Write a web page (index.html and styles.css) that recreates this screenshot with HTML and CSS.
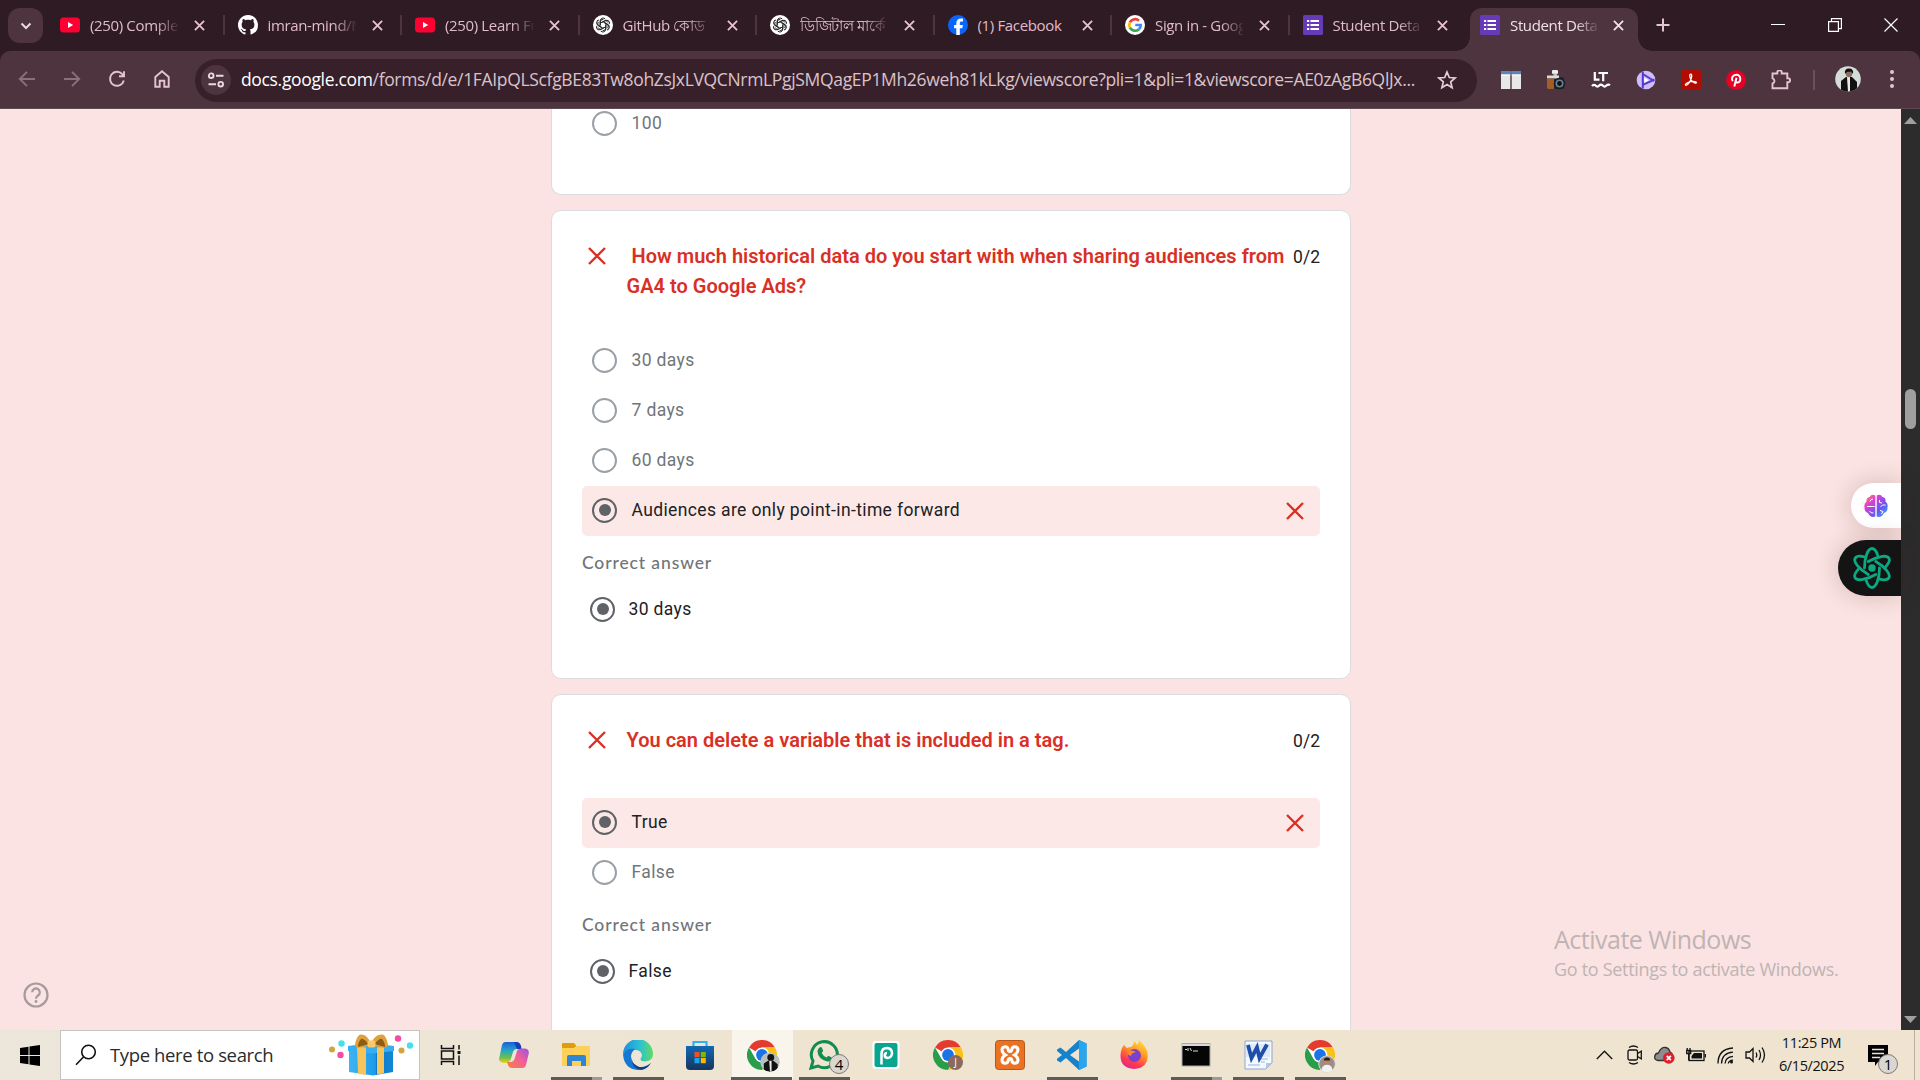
FILE: index.html
```html
<!DOCTYPE html>
<html lang="en">
<head>
<meta charset="utf-8">
<title>Student Details</title>
<link rel="stylesheet" href="styles.css">
</head>
<body>
<svg class="defs" aria-hidden="true">
  <defs>
    <symbol id="x" viewBox="0 0 12 12"><path d="M1 1l10 10M11 1L1 11" fill="none" stroke="currentColor" stroke-width="2"/></symbol>
    <symbol id="wrong" viewBox="0 0 18 18"><path d="M1 1l16 16M17 1L1 17" fill="none" stroke="#d93025" stroke-width="2.4"/></symbol>
    <symbol id="yt" viewBox="0 0 20 20"><rect y="2.5" width="20" height="15" rx="3.5" fill="#ff0033"/><path d="M8 7l5.2 3L8 13z" fill="#fff"/></symbol>
    <symbol id="gpt" viewBox="0 0 20 20"><circle cx="10" cy="10" r="10" fill="#fff"/><g fill="none" stroke="#222" stroke-width="1"><g id="petal"><path d="M7.3 10V5.8a2.8 2.8 0 0 1 5-1.7M7.3 8.2l3.6-2.1a2.8 2.8 0 0 1 4 1.4"/></g><use href="#petal" transform="rotate(60 10 10)"/><use href="#petal" transform="rotate(120 10 10)"/><use href="#petal" transform="rotate(180 10 10)"/><use href="#petal" transform="rotate(240 10 10)"/><use href="#petal" transform="rotate(300 10 10)"/></g></symbol>
    <symbol id="forms" viewBox="0 0 20 20"><rect width="20" height="20" rx="1.5" fill="#673ab7"/><path d="M7.500 6h8.500M7.500 10h8.500M7.500 14h8.500" stroke="#fff" stroke-width="2.200"/><path d="M4 6h2.200M4 10h2.200M4 14h2.200" stroke="#fff" stroke-width="2.200"/></symbol>
    <symbol id="chrome" viewBox="0 0 30 30"><circle cx="15" cy="15" r="15" fill="#fff"/><path d="M15 15L2 7.500A15 15 0 0 1 28 7.500H15z" fill="#e33b2e"/><path d="M2 7.500A15 15 0 0 0 15 30l6.500-11.250L15 15l-6.500 3.750z" fill="#2a9d4a"/><path d="M28 7.500A15 15 0 0 1 15 30l6.500-11.250L15 7.500z" fill="#fbc116"/><circle cx="15" cy="15" r="7.500" fill="#fff"/><circle cx="15" cy="15" r="5.900" fill="#1a73e8"/></symbol>
  </defs>
</svg>

<header class="browser">
  <div class="tabstrip">
    <button class="tab-search"><svg width="12" height="8" viewBox="0 0 12 8"><path d="M1.500 1.500L6 6l4.500-4.500" fill="none" stroke="#ecd9e0" stroke-width="2"/></svg></button>
    <div class="tab"><svg class="fav"><use href="#yt"/></svg><span class="tab-title">(250) Complete</span><svg class="close"><use href="#x"/></svg></div>
    <div class="tab"><svg class="fav" viewBox="0 0 16 16"><path fill="#fff" d="M8 0C3.580 0 0 3.580 0 8c0 3.540 2.290 6.530 5.470 7.590.4.070.55-.17.55-.38 0-.19-.01-.82-.01-1.490-2.010.37-2.530-.49-2.690-.94-.09-.23-.48-.94-.82-1.130-.28-.15-.68-.52-.01-.53.63-.01 1.080.58 1.230.82.72 1.210 1.870.87 2.330.66.07-.52.28-.87.51-1.070-1.780-.2-3.640-.89-3.640-3.950 0-.87.31-1.590.82-2.150-.08-.2-.36-1.020.08-2.120 0 0 .67-.21 2.200.82.64-.18 1.320-.27 2-.27s1.360.09 2 .27c1.530-1.040 2.200-.82 2.200-.82.44 1.100.16 1.920.08 2.120.51.56.82 1.270.82 2.150 0 3.070-1.870 3.750-3.650 3.950.29.25.54.73.54 1.480 0 1.070-.01 1.930-.01 2.200 0 .21.15.46.55.38A8.010 8.010 0 0 0 16 8c0-4.420-3.580-8-8-8z"/></svg><span class="tab-title">imran-mind/Mern</span><svg class="close"><use href="#x"/></svg></div>
    <div class="tab"><svg class="fav"><use href="#yt"/></svg><span class="tab-title">(250) Learn Full</span><svg class="close"><use href="#x"/></svg></div>
    <div class="tab"><svg class="fav"><use href="#gpt"/></svg><span class="tab-title">GitHub কোড</span><svg class="close"><use href="#x"/></svg></div>
    <div class="tab"><svg class="fav"><use href="#gpt"/></svg><span class="tab-title">ডিজিটাল মার্কে</span><svg class="close"><use href="#x"/></svg></div>
    <div class="tab"><svg class="fav" viewBox="0 0 20 20"><circle cx="10" cy="10" r="10" fill="#0866ff"/><path d="M8.300 19.900v-6.700H6.100V10h2.200V8.600c0-3.500 1.600-5.100 5-5.100.6 0 1.200.1 1.700.2v2.900h-1.400c-1.300 0-1.800.6-1.800 1.900V10h3.100l-.6 3.200h-2.500v6.700z" fill="#fff"/></svg><span class="tab-title whole">(1) Facebook</span><svg class="close"><use href="#x"/></svg></div>
    <div class="tab"><svg class="fav" viewBox="0 0 20 20"><circle cx="10" cy="10" r="10" fill="#fff"/><g fill="none" stroke-width="2.700"><path d="M14 5.800A5.800 5.800 0 0 0 4.900 7.300" stroke="#ea4335"/><path d="M4.900 7.300a5.800 5.800 0 0 0 0 5.400" stroke="#fbbc05"/><path d="M4.900 12.700a5.800 5.800 0 0 0 9 1.500" stroke="#34a853"/><path d="M13.900 14.200A5.500 5.500 0 0 0 15.700 10H10.300" stroke="#4285f4"/></g></svg><span class="tab-title">Sign in - Google</span><svg class="close"><use href="#x"/></svg></div>
    <div class="tab last"><svg class="fav"><use href="#forms"/></svg><span class="tab-title">Student Details</span><svg class="close"><use href="#x"/></svg></div>
    <div class="tab active"><svg class="fav"><use href="#forms"/></svg><span class="tab-title">Student Details</span><svg class="close"><use href="#x"/></svg></div>
    <svg class="plus" width="14" height="14" viewBox="0 0 14 14"><path d="M7 .5v13M.5 7h13" stroke="#e6c3d0" stroke-width="2"/></svg>
    <div class="win-controls">
      <svg width="14" height="14"><path d="M0 6.500h14" stroke="#fff"/></svg>
      <svg width="14" height="14" fill="none" stroke="#fff" stroke-width="1.200"><path d="M.6 3.600h9.800v9.800H.6zM3.500 3.500V.6h9.900v10h-3"/></svg>
      <svg width="14" height="14"><path d="M.5.5l13 13M13.500.5l-13 13" stroke="#fff" stroke-width="1.200"/></svg>
    </div>
  </div>

  <div class="toolbar">
    <div class="nav">
      <svg width="20" height="20" viewBox="0 0 20 20" stroke="#8b707b"><path d="M18 10H3M10 2.800L2.800 10l7.200 7.200"/></svg>
      <svg width="20" height="20" viewBox="0 0 20 20" stroke="#8b707b"><path d="M2 10h15M10 2.800l7.200 7.200-7.200 7.200"/></svg>
      <svg width="20" height="20" viewBox="0 0 20 20" stroke="#e6c3d0"><path d="M16.800 11.500A7 7 0 1 1 15.300 5.200L17 7M17 2.200V7.200H12"/></svg>
      <svg width="20" height="20" viewBox="0 0 20 20" stroke="#e6c3d0"><path d="M3.300 8L10 2.200 16.700 8v9.800H12.300v-6H7.700v6H3.300z"/></svg>
    </div>
    <div class="omnibox">
      <span class="site-info"><svg width="18" height="16" viewBox="0 0 18 16" fill="none" stroke="#ecd9e0" stroke-width="1.900"><circle cx="4.200" cy="3.700" r="2.300"/><path d="M9 3.700h7.500M1.500 12.200H9"/><circle cx="13.700" cy="12.200" r="2.300"/></svg></span>
      <span class="url"><b>docs.google.com</b>/forms/d/e/1FAIpQLScfgBE83Tw8ohZsJxLVQCNrmLPgjSMQagEP1Mh26weh81kLkg/viewscore?pli=1&amp;pli=1&amp;viewscore=AE0zAgB6QlJx...</span>
      <svg class="star" width="20" height="20" viewBox="0 0 20 20"><path d="M10 2l2.300 5.500 5.900.5-4.500 3.900 1.400 5.800L10 14.600l-5.100 3.100 1.400-5.800L1.800 8l5.900-.5z" fill="none" stroke="#e6cdd6" stroke-width="1.700"/></svg>
    </div>
    <div class="extensions">
      <svg viewBox="0 0 20 20"><path d="M0 1h9.300v18H0zM10.700 1H20v18h-9.300z" fill="#e8e8e8"/><path d="M0 1h9.300v3.500H0zM10.700 1H20v3.500h-9.300z" fill="#5b86bd"/><path d="M0 5h9.300M10.700 5H20" stroke="#fff"/></svg>
      <svg viewBox="0 0 20 20"><rect x="6" y="0" width="6" height="4" rx="1" fill="#eee"/><rect x="7.500" y="3.500" width="3.500" height="3" fill="#b9bcc0"/><rect x="1" y="7" width="17" height="12" rx="1.500" fill="#26282c"/><path d="M1 5.500h12v3H1z" fill="#d9dadb"/><path d="M1 8.500h7V19H2.500A1.500 1.500 0 0 1 1 17.500z" fill="#a35e28"/><circle cx="13.500" cy="13.500" r="5.800" fill="#1b1d20"/><circle cx="13.500" cy="13.500" r="4" fill="#6b8194"/><circle cx="13.500" cy="13.500" r="2.400" fill="#111"/></svg>
      <svg viewBox="0 0 20 20" fill="none" stroke="#fff" stroke-width="2.200"><path d="M3.800 2v7.700h4.700M7.500 3h9.500M12.200 3v8.200M1 16.200q1.800-2.500 3.600-.6t3.600 0 3.600 0 3.600 0 3.600-.3"/></svg>
      <svg viewBox="0 0 20 20"><circle cx="10" cy="10" r="9.300" fill="#cdbff7"/><path d="M6.800 1.800v16.600M6.800 14.800L18.500 9.500M6.800 4l11.400 7" stroke="#5a35d8" stroke-width="2"/><path d="M8.300 7.500l4.500 2.800-4.500 2.500z" fill="#fff"/></svg>
      <svg viewBox="0 0 20 20"><rect width="20" height="20" rx="3" fill="#b30b00"/><path d="M9.700 4.200c1.900 0 .9 4-.4 6.500-1.300 2.600-3.500 5.100-4.600 4.500-1.200-.8 2-3 5-3.500 3.200-.5 6-.2 5.700 1-.3 1.400-3.700-.3-5.300-2.700-1.300-2.300-1.900-5.800-.4-5.800z" fill="none" stroke="#fff" stroke-width="1.300"/></svg>
      <svg viewBox="0 0 20 20"><circle cx="10" cy="10" r="10" fill="#e60023"/><path d="M8.300 16.500l2.200-8.800M6.800 11.200C4.800 8.500 6.500 4.800 10.300 4.800c4.800 0 5.300 7.400 1.300 7.700-1.100 0-1.700-.5-2-1.200" fill="none" stroke="#fff" stroke-width="2"/></svg>
      <svg viewBox="0 0 20 20"><path d="M1.500 3.500h4.800v-1a2.200 2.200 0 0 1 4.400 0v1h5.600v4.800h.8a2 2 0 0 1 0 4h-.8v6H1.500v-4.800a2.700 2.700 0 0 0 0-5.200z" fill="none" stroke="#e6c3d0" stroke-width="1.900"/></svg>
    </div>
    <span class="divider"></span>
    <svg class="avatar" width="26" height="26" viewBox="0 0 26 26"><clipPath id="av"><circle cx="13" cy="13" r="12.800"/></clipPath><g clip-path="url(#av)"><path d="M0 0h26v26H0z" fill="#d5ddd8"/><path d="M6 26V15l5-4h6l5 5v10z" fill="#111"/><path d="M12 11h3v14l-2 1z" fill="#e9e9e9"/><ellipse cx="14" cy="7.500" rx="3.200" ry="3.800" fill="#8c6e60"/><path d="M10 8q-1-5.500 4-5.500T18 8l-2-2.500-4 .5z" fill="#111"/></g></svg>
    <svg class="kebab" width="6" height="22" fill="#e6c3d0"><circle cx="3" cy="4" r="2"/><circle cx="3" cy="11" r="2"/><circle cx="3" cy="18" r="2"/></svg>
  </div>
</header>

<div class="viewport">
  <main class="page">
    <section class="card card-cut">
      <div class="option"><span class="radio"></span>100</div>
    </section>

    <section class="card">
      <div class="question"><svg class="mark"><use href="#wrong"/></svg><h2>&nbsp;How much historical data do you start with when sharing audiences from GA4 to Google Ads?</h2><span class="score">0/2</span></div>
      <div class="option"><span class="radio"></span>30 days</div>
      <div class="option"><span class="radio"></span>7 days</div>
      <div class="option"><span class="radio"></span>60 days</div>
      <div class="option chosen"><span class="radio on"></span>Audiences are only point-in-time forward<svg class="mark"><use href="#wrong"/></svg></div>
      <div class="correct-label">Correct answer</div>
      <div class="answer"><span class="radio on"></span>30 days</div>
    </section>

    <section class="card">
      <div class="question"><svg class="mark"><use href="#wrong"/></svg><h2>You can delete a variable that is included in a tag.</h2><span class="score">0/2</span></div>
      <div class="option chosen"><span class="radio on"></span>True<svg class="mark"><use href="#wrong"/></svg></div>
      <div class="option"><span class="radio"></span>False</div>
      <div class="correct-label">Correct answer</div>
      <div class="answer"><span class="radio on"></span>False</div>
    </section>
  </main>
  <div class="scrollbar">
    <svg width="13" height="7"><path d="M6.500 0L13 7H0z" fill="#9f9f9f"/></svg>
    <span class="thumb"></span>
    <svg class="down" width="13" height="7"><path d="M6.500 7L13 0H0z" fill="#9f9f9f"/></svg>
  </div>

  <svg class="help" width="26" height="26" viewBox="0 0 26 26"><circle cx="13" cy="13" r="11.500" fill="none" stroke="#a69a9c" stroke-width="2.200"/><path d="M9.200 10.300a3.800 3.800 0 1 1 5.800 3.200c-1.300.9-2 1.500-2 3.200" fill="none" stroke="#a69a9c" stroke-width="2.200"/><circle cx="13" cy="19.500" r="1.400" fill="#a69a9c"/></svg>
  <div class="pill brain"><svg width="24" height="24" viewBox="0 0 24 24"><defs><linearGradient id="bg" x1="0" y1="0" x2="1" y2="1"><stop offset="0" stop-color="#ff9a3c"/><stop offset=".3" stop-color="#e040d0"/><stop offset=".65" stop-color="#6a55f0"/><stop offset="1" stop-color="#35b6ff"/></linearGradient></defs><path d="M11.300 1.500Q7.500-.3 5.500 3 2 3.500 2.500 7.500-.5 10 .6 13.500 0 18 4 19q2.500 5.200 7.300 3.500zM12.700 1.500Q16.500-.3 18.500 3 22 3.500 21.500 7.500q3 2.500 1.900 6 .6 4.500-3.400 5.500-2.500 5.200-7.300 3.500z" fill="url(#bg)"/><path d="M3 12.500h7.500M9 5q-2.500 0-3 2.500M5.500 17q1 2.500 4 2M15.500 6v2.500l2.500.5M21.500 11h-3l-2 2M16 16.500l3 1-1.500 2.500" stroke="#fff" stroke-width="1" fill="none"/></svg></div>
  <div class="pill atom"><svg width="40" height="44" viewBox="0 0 40 44" fill="none" stroke="#0aa982" stroke-width="2.800" stroke-linecap="round"><ellipse id="orb" cx="20" cy="22" rx="7.500" ry="19.500" pathLength="100" stroke-dasharray="36 14"/><use href="#orb" transform="rotate(60 20 22)"/><use href="#orb" transform="rotate(120 20 22)"/><circle cx="20" cy="22" r="3.700" fill="#0aa982" stroke="none"/></svg></div>
  <div class="activate"><p class="big">Activate Windows</p><p class="small">Go to Settings to activate Windows.</p></div>
</div>

<footer class="taskbar">
  <div class="start"><svg width="20" height="21" viewBox="0 0 20 21"><path d="M0 3l8.500-1.300V10H0zM9.500 1.500L20 0v10H9.500zM0 11h8.500v8.300L0 18zM9.500 11H20v10L9.500 19.500z"/></svg></div>
  <div class="search">
    <svg width="22" height="22" viewBox="0 0 22 22" fill="none" stroke="#111" stroke-width="1.600"><circle cx="13.500" cy="8" r="6.800"/><path d="M8.700 12.800L1 20.700"/></svg>
    <span>Type here to search</span>
    <svg class="gift" width="84" height="42" viewBox="0 0 84 42"><defs><linearGradient id="gb"><stop offset="0" stop-color="#3fb4f4"/><stop offset=".6" stop-color="#1b9bea"/><stop offset=".62" stop-color="#0b7ac6"/><stop offset="1" stop-color="#1488d6"/></linearGradient></defs><path d="M20 16l22 2.500L64 16v22l-20 3.500L20 38z" fill="url(#gb)"/><path d="M19 12l23-3 23 3v5l-22 2.500L19 17z" fill="#38aef2"/><path d="M28 12.500l9 1v27.500l-8-1.200zM55 12.500l-7 1v27l7-1.200z" fill="#f5c55c"/><path d="M42 11C34 13 27 16 26 11 27 4 30 0 32 .5c5 0 9 5 10 10.500zM42 11c8 2 15 5 17 0C58 4 55 0 53 .5c-6 0-10 5-11 10.500z" fill="#dfa13b"/><path d="M40 10q-6-6-8-5-3 3-3 8zM45 10q6-6 8-5 3 3 3 8z" fill="#8d5c15"/><rect x="38.500" y="6.500" width="8" height="7" rx="2" fill="#fac967"/><g><circle cx="3" cy="15.500" r="3" fill="#d4a33d"/><circle cx="12.500" cy="9.500" r="3.200" fill="#45e0e8"/><circle cx="11.500" cy="21" r="3.200" fill="#f74aa5"/><circle cx="69" cy="4.500" r="3.200" fill="#f74aa5"/><circle cx="72.500" cy="16.500" r="3" fill="#d4a33d"/><circle cx="81" cy="11.500" r="3.200" fill="#45e0e8"/></g></svg>
  </div>
  <div class="taskview"><svg width="21" height="20" viewBox="0 0 21 20" fill="none" stroke="#111" stroke-width="1.500"><path d="M1.500 0v3.500h12V0M1.500 6h12v8h-12zM1.500 20v-3.500h12V20M19 0v4.500M19 10.500V20"/><path d="M17.500 7.500h3" stroke-width="3"/></svg></div>

  <div class="apps">
    <div class="app"><svg viewBox="0 0 30 30"><defs><linearGradient id="c1" x1="0" y1="0" x2="0" y2="1"><stop offset="0" stop-color="#1c5fd8"/><stop offset=".4" stop-color="#23a5c8"/><stop offset=".75" stop-color="#6cc04a"/><stop offset="1" stop-color="#f5d21c"/></linearGradient><linearGradient id="c2" x1="1" y1="0" x2="0" y2="1"><stop offset="0" stop-color="#9a52e0"/><stop offset=".45" stop-color="#f0609a"/><stop offset="1" stop-color="#f7803b"/></linearGradient></defs><path d="M6 2h11q3 0 4 3l1 4h-4q-3 0-4 3l-2.500 8q-1 3-4 3H4q-5-1-3.500-6L3 5q1-3 3-3z" fill="url(#c1)"/><path d="M17 2q4 0 5 4l.6 3H18l-3-7z" fill="#143fb5"/><path d="M24 28H13q-3 0-4-3l-1-3h3.500q3 0 4-3L18 11q1-2.500 4-2.500h4q5 1 3.500 6L27 25q-1 3-3 3z" fill="url(#c2)"/></svg></div>
    <div class="app run more"><svg viewBox="0 0 30 30"><path d="M1 5V3.500Q1 3 2 3h11l2.500 3-2.500 2H1z" fill="#e19d05"/><path d="M1 8h12.500l2.500-2H29v20H1z" fill="#fdd05a"/><path d="M6 26v-9q0-2 2-2h15q2 0 2 2v9h-5v-5h-9v5z" fill="#2f86d4"/></svg></div>
    <div class="app run"><svg viewBox="0 0 30 30"><defs><linearGradient id="e1"><stop offset="0" stop-color="#1c8fe0"/><stop offset=".55" stop-color="#2cc0d5"/><stop offset="1" stop-color="#5fdc62"/></linearGradient></defs><path d="M0 14A15 15 0 0 1 30 14q0 7-7.500 7.500-5 0-5-2.500c0-1 1.500-2 1.500-4q-1-5-7-5-9 0-12 4z" fill="url(#e1)"/><path d="M0 14q4-6 12-5-4 3-4 8 1 8 8 10 6 1 12-4-5 7-13 7Q1 29 0 14z" fill="#1477d2"/><path d="M9 14q-2 9 6 12.500 7 2 13-3.500-3.500 6-10 7Q7 28 9 14z" fill="#123f87"/></svg></div>
    <div class="app"><svg viewBox="0 0 30 30"><path d="M8.500 7V2h13v5" fill="none" stroke="#2fb1f2" stroke-width="2.200"/><defs><linearGradient id="st" x1="0" y1="0" x2="0" y2="1"><stop offset="0" stop-color="#1268b4"/><stop offset="1" stop-color="#17355f"/></linearGradient></defs><path d="M1 6h28v20q0 4-4 4H5q-4 0-4-4z" fill="url(#st)"/><path d="M9.500 12H14.500v5.200h-5z" fill="#f15022"/><path d="M15.800 12h5v5.200h-5z" fill="#7fba00"/><path d="M9.500 18h5v5.200h-5z" fill="#18a3ee"/><path d="M15.800 18h5v5.200h-5z" fill="#fdb900"/></svg></div>
    <div class="app run current"><svg viewBox="0 0 30 30"><use href="#chrome" width="30" height="30"/></svg><svg class="mini" viewBox="0 0 26 26"><g clip-path="url(#av)"><path d="M0 0h26v26H0z" fill="#b9c0bd"/><path d="M5 26V15l6-4h6l6 5v10z" fill="#111"/><path d="M12 11h3v14l-2 1z" fill="#e9e9e9"/><circle cx="14" cy="7" r="4.500" fill="#181516"/></g></svg></div>
    <div class="app run"><svg viewBox="0 0 30 30"><path d="M2 28l2-7A13 13 0 1 1 9 26z" fill="none" stroke="#128c50" stroke-width="3"/><path d="M10 8q2-2 3 0l1.200 3-1.500 2q1.500 3 4.800 4.500l1.800-1.800 3.500 1.800q0 4-4.500 4Q9 19 8.500 11.500 8.600 9 10 8z" fill="#128c50"/></svg><span class="count">4</span></div>
    <div class="app"><svg viewBox="0 0 30 30"><rect x="1.500" y="1" width="27" height="28" rx="3" fill="#fff"/><rect x="3.500" y="3" width="23" height="24" rx="2" fill="#0aa58f"/><path d="M10.500 24.500V14q0-6 5.500-6 5 .5 5 5t-4.500 5q-3-.5-2.800-3 .3-2 2.300-2" fill="none" stroke="#fff" stroke-width="2.500"/></svg></div>
    <div class="app"><svg viewBox="0 0 30 30"><use href="#chrome" width="30" height="30"/></svg><span class="mini j">J</span></div>
    <div class="app"><svg viewBox="0 0 30 30"><rect x=".5" y=".5" width="29" height="29" rx="3" fill="#ec7223" stroke="#b4581c"/><path d="M15 11.500q-1.500 0-1.800-2-.4-2.700-3-2.700Q7 7 7 10q.2 3 3.500 5Q7 17 7 20q0 3.200 3.200 3.200 2.600 0 3-2.700.3-2 1.800-2t1.800 2q.4 2.700 3 2.700Q23 23.200 23 20q0-3-3.500-5Q22.800 13 23 10q0-3-3.200-3.200-2.600 0-3 2.700-.3 2-1.800 2z" fill="none" stroke="#fff" stroke-width="3"/></svg></div>
    <div class="app run"><svg viewBox="0 0 30 30"><path d="M22 0l7.500 3.500v23L22 30 9 18l-5.500 4.500L0 20.500v-1.700L5 15 0 11V9.500l3.500-2L9 12zM22 8.500L13 15l9 6.500z" fill="#1583cc" fill-rule="evenodd"/><path d="M22 0l7.500 3.500v23L22 30z" fill="#29a4ee"/></svg></div>
    <div class="app"><svg viewBox="0 0 30 30"><defs><linearGradient id="ff" x1=".8" y1="0" x2=".3" y2="1"><stop offset="0" stop-color="#ffe14a"/><stop offset=".4" stop-color="#ff9a1f"/><stop offset=".75" stop-color="#ff3a52"/><stop offset="1" stop-color="#e0268a"/></linearGradient></defs><path d="M5 5l3 3q2-1 4-1 3-2 3-6 2 2 3 4 2-3 2-5 7 6 8.500 13Q30 28 15 29 1 28 1.500 15 2 8 5 5z" fill="url(#ff)"/><circle cx="15.500" cy="15.500" r="6.500" fill="#7c3fd0"/><path d="M8 11q5-1.500 9 1-5 1-5 4-4-1-4-5z" fill="#ff8a20"/></svg></div>
    <div class="app run more"><svg viewBox="0 0 30 30"><rect x="1" y="3.500" width="28" height="22.500" fill="#050505" stroke="#a8a8a8"/><path d="M1 4h28v2H1z" fill="#d8d8d8"/><path d="M4 9.500h2M7 8v3M9 8l1.500 3M12 11h5" stroke="#ddd" stroke-width="1"/></svg></div>
    <div class="app run"><svg viewBox="0 0 30 30"><path d="M2 1h27v22l-6 6H2z" fill="#f4f8ff" stroke="#8da6cf"/><path d="M23 29v-6h6z" fill="#b6c7e4"/><path d="M18 19h7M18 22h4M5 25h12" stroke="#9eb4db"/><path d="M3 4h24v13H3z" fill="#dfe9fa"/><path d="M5 5l3.500 13L14 7.500 16.500 18 24 4.500" fill="none" stroke="#1d4fa8" stroke-width="3.800"/></svg></div>
    <div class="app run"><svg viewBox="0 0 30 30"><use href="#chrome" width="30" height="30"/></svg><svg class="mini" viewBox="0 0 26 26"><circle cx="13" cy="13" r="12" fill="#9c8d85" stroke="#ddd" stroke-width="1.500"/><path d="M5 22q1-8 8-8t8 8q-8 6-16 0z" fill="#f2f2f2"/><circle cx="13" cy="9" r="4.500" fill="#b98668"/><path d="M8.500 8q0-4.500 4.500-4.500T17.500 8z" fill="#2b1d18"/></svg></div>
  </div>

  <div class="tray">
    <svg class="chevron" width="17" height="10" viewBox="0 0 17 10"><path d="M.8 9L8.500 1.200 16.200 9"/></svg>
    <svg width="16" height="20" viewBox="0 0 16 20"><rect x="1" y="5" width="9.500" height="10" rx="1.500"/><path d="M10.500 8.500l3.800-2.300v7.600l-3.800-2.300M2 2.500q4.500-3 9 0M2 17.500q4.500 3 9 0"/></svg>
    <svg width="21" height="18" viewBox="0 0 21 18"><path d="M4 14.500Q0 14 .8 10q.8-3 3.700-3Q7 1 11.500 1.500q3.500.5 4.500 4.500 3 1 2.500 5L17 14.500z" fill="#8d8d8d" stroke="#333"/><circle cx="14.800" cy="12" r="5.800" fill="#dc1f2e" stroke="none"/><path d="M12.700 9.900l4.200 4.200M16.900 9.900l-4.200 4.200" stroke="#fff" stroke-width="1.700"/></svg>
    <svg width="20" height="14" viewBox="0 0 20 14"><rect x="3" y="3" width="15" height="9.500"/><path d="M8 5h8v5.500H5.500V8z" fill="#111" stroke="none"/><path d="M19.300 6v3.500M1.200 0v2.500M4 0v2.500M.7 2.500h4v3h-4zM2.700 5.500V12" /></svg>
    <svg width="17" height="17" viewBox="0 0 17 17"><path d="M1 16.500Q1 2 16 1M4.500 16.500Q5 6 16 5.200M8 16.500Q8.500 10 16 9.300M11.300 16.500q.5-3 4.700-3.300"/><circle cx="14.500" cy="15" r="1.500" fill="#111" stroke="none"/></svg>
    <svg width="21" height="18" viewBox="0 0 21 18"><path d="M1 6h3.500L8 2.500v13L4.500 12H1zM11 6.500q1.500 2.500 0 5M14 4q3 5 0 10M17 1.500q5 7.500 0 15"/></svg>
  </div>
  <div class="clock"><span>11:25 PM</span><span>6/15/2025</span></div>
  <div class="notify"><svg width="20" height="21" viewBox="0 0 20 21"><path d="M0 0h20v17H10l-3 4v-4H0z"/><path d="M4 4.500h12M4 8.500h12M4 12.500h8" stroke="#efe3d0" stroke-width="1.300"/></svg><span class="count">1</span></div>
</footer>
</body>
</html>
```
FILE: styles.css
```css
* { box-sizing: border-box; }
body {
  margin: 0; width: 1920px; height: 1080px; overflow: hidden;
  display: flex; flex-direction: column;
  font-family: "Open Sans", "Noto Sans", sans-serif;
}
button { border: 0; padding: 0; }
.defs { position: absolute; width: 0; height: 0; }

/* browser frame */
.browser { height: 109px; flex: none; background: #2f1b23; display: flex; flex-direction: column; }
.tabstrip { height: 51px; display: flex; align-items: center; padding-left: 8px; }
.tab-search { width: 35px; height: 35px; margin-right: 4px; border-radius: 12px; background: #4e343e; display: grid; place-items: center; }
.tab { position: relative; width: 177.500px; height: 42px; flex: none; display: flex; align-items: center; padding: 0 0 1px 13px; }
.tab::after { content: ""; position: absolute; right: 0; top: 10px; width: 2px; height: 20px; background: #4e343e; }
.tab.last::after, .tab.active::after { display: none; }
.fav { width: 20px; height: 20px; flex: none; }
.tab-title {
  width: 88px; margin: 0 16px 0 10px; padding-bottom: 1px; overflow: hidden; white-space: nowrap;
  font-size: 15px; letter-spacing: -.35px; line-height: 24px; color: #e0bccb;
  -webkit-mask-image: linear-gradient(90deg, #000 66px, transparent 90px);
  mask-image: linear-gradient(90deg, #000 66px, transparent 90px);
}
.tab-title.whole { -webkit-mask-image: none; mask-image: none; }
.close { width: 11px; height: 11px; color: #e6c3d0; }
.tab.active {
  width: 168px; margin-left: 3px; height: 43px; align-self: flex-end; padding: 0 0 9px 10px;
  border-radius: 12px 12px 0 0; background: #4e343e;
}
.tab.active .tab-title { color: #f3dfe6; margin-right: 15px; }
.tab.active .close { color: #f3dfe6; }
.tab.active::before {
  content: ""; position: absolute; left: -14px; right: -14px; bottom: 0; height: 14px;
  background:
    radial-gradient(circle at 0 0, transparent 13.500px, #4e343e 14px) left / 14px 14px no-repeat,
    radial-gradient(circle at 100% 0, transparent 13.500px, #4e343e 14px) right / 14px 14px no-repeat;
}
.plus { margin: 0 0 2px 18px; }
.win-controls { margin: 0 0 2px auto; padding-right: 22px; display: flex; gap: 42.500px; }

.toolbar {
  height: 58px; display: flex; align-items: center; padding-left: 17px;
  background: #4e343e; border-bottom: 1px solid #5e4b52; border-radius: 10px 10px 0 0;
}
.nav { display: flex; gap: 25px; width: 178px; padding-bottom: 1px; }
.nav svg { fill: none; stroke-width: 1.900; }
.omnibox { width: 1282px; height: 43px; border-radius: 22px; background: #38202a; display: flex; align-items: center; padding: 0 20px 0 6px; margin-top: 1px; }
.site-info { width: 30px; height: 30px; border-radius: 50%; background: #4e343e; display: grid; place-items: center; }
.url { margin-left: 10px; padding-bottom: 2px; font-size: 17.500px; line-height: 26px; letter-spacing: -.335px; white-space: nowrap; color: #d8c3cb; }
.url b { font-weight: 400; color: #fff; }
.star { margin-left: auto; }
.extensions { display: flex; gap: 25px; margin-left: 24px; }
.extensions svg { width: 20px; height: 20px; }
.divider { width: 2px; height: 20px; background: #6d4f5b; margin-left: 22px; }
.avatar { margin: 0 0 2px 20px; }
.kebab { margin: 0 0 2px 28px; }

/* page */
.viewport { position: relative; height: 921px; flex: none; display: flex; background: #fae3e2; overflow: hidden; }
.page { flex: 1; padding-left: 551px; font-family: Roboto, sans-serif; display: flex; flex-direction: column; gap: 15px; }
.card { width: 800px; flex: none; background: #fff; border: 1px solid #dadce0; border-radius: 10px; padding: 30px 30px 56px; }
.card-cut { height: 86px; border-top: 0; border-radius: 0 0 10px 10px; padding: 0 30px; }
.card-cut .option { margin-top: -10px; }
.question { display: flex; min-height: 38px; margin-bottom: 35px; }
.mark { width: 18px; height: 18px; flex: none; }
.question .mark { margin: 6px 0 0 6px; }
h2 { margin: 0 0 0 20.500px; width: 662px; font-size: 20px; line-height: 30px; font-weight: 600; letter-spacing: .013px; color: #d93025; }
.score { margin-left: auto; font-size: 17.500px; line-height: 32px; color: #202124; white-space: nowrap; }
.option { height: 50px; display: flex; align-items: center; padding: 0 16px 2px 10px; font-size: 17.500px; letter-spacing: .37px; color: #70757a; border-radius: 5px; white-space: nowrap; }
.option .mark { margin: 2px 0 0 auto; }
.chosen { background: #fce8e6; color: #202124; }
.radio { width: 25px; height: 25px; margin-right: 14.500px; border: 2px solid #9aa0a6; border-radius: 50%; display: grid; place-items: center; flex: none; }
.radio.on { border-color: #5f6368; }
.radio.on::after { content: ""; width: 12px; height: 12px; border-radius: 50%; background: #5f6368; }
.correct-label { margin-top: 14px; font: 500 17.500px/26px Lato, sans-serif; letter-spacing: .88px; color: #70757a; }
.answer { margin-top: 20px; padding-left: 8px; height: 26px; display: flex; align-items: center; font-size: 17.500px; letter-spacing: .37px; color: #202124; }
.answer .radio { margin-right: 13.500px; }

.scrollbar { width: 19px; background: #2c2c2c; display: flex; flex-direction: column; align-items: center; padding: 8px 0 7px; }
.thumb { width: 11px; height: 40px; margin-top: 265px; border-radius: 6px; background: #9f9f9f; }
.down { margin-top: auto; }

.help { position: absolute; left: 23px; top: 873px; }
.pill { position: absolute; right: 19px; display: flex; align-items: center; box-shadow: 0 0 24px rgba(60, 20, 20, .2); }
.brain { top: 374px; width: 50px; height: 45px; padding-left: 13px; border-radius: 23px 0 0 23px; background: #fff; }
.atom { top: 431px; width: 63px; height: 56px; padding-left: 14px; border-radius: 28px 0 0 28px; background: #141414; }
.activate { position: absolute; left: 1554px; top: 812px; color: #bfb3b3; white-space: nowrap; }
.activate p { margin: 0; }
.big { font-size: 25px; line-height: 36px; letter-spacing: -.5px; }
.small { font-size: 18px; line-height: 25px; letter-spacing: -.3px; }

/* taskbar */
.taskbar { height: 50px; display: flex; align-items: stretch; background: linear-gradient(90deg, #ece6db, #efe4d0 45%, #f0e4d0); }
.start { width: 60px; display: grid; place-items: center; }
.search { width: 360px; background: #fff; border: 1px solid #c6c4be; display: flex; align-items: center; padding-left: 14px; white-space: nowrap; font-size: 18.500px; letter-spacing: -.37px; color: #2b2b2b; }
.search span { margin-left: 13px; padding-bottom: 2px; }
.gift { margin-left: auto; margin-right: 6px; }
.taskview { width: 63px; display: grid; place-items: center; padding-right: 3px; }
.apps { display: flex; }
.app { position: relative; width: 62px; display: grid; place-items: center; }
.app > svg:first-child { width: 30px; height: 30px; }
.app.current { background: linear-gradient(#f9f5ed, #f9f5ed) center / 61px 100% no-repeat; }
.app.run::after { content: ""; position: absolute; left: 6px; bottom: 0; width: 51px; height: 3px; background: #5f5b54; }
.app.current::after { left: 0; width: 61px; }
.app.more::after { background: linear-gradient(90deg, #5f5b54 41px, #9d9b97 41px); }
.mini { position: absolute; left: 29px; top: 25px; width: 18px; height: 18px; border-radius: 50%; }
.current .mini { top: 22px; width: 20px; height: 20px; }
.j { width: 15px; height: 15px; left: 31px; top: 25px; background: #8a6a5e; color: #fff; font-size: 10px; line-height: 15px; text-align: center; }
.count { position: absolute; width: 20px; height: 20px; border-radius: 50%; border: 1px solid #7a7a7a; background: #dad7d0; font-size: 15px; line-height: 18px; text-align: center; color: #000; }
.app .count { left: 36px; top: 24px; }
.tray { margin-left: auto; display: flex; align-items: center; gap: 11px; width: 173px; }
.tray svg { fill: none; stroke: #111; stroke-width: 1.300; flex: none; }
.tray .chevron { margin-right: 3px; }
.clock { width: 77px; margin-left: 4px; display: flex; flex-direction: column; align-items: center; padding-top: 2px; font-size: 14.500px; line-height: 22.500px; letter-spacing: -.4px; color: #111; white-space: nowrap; }
.notify { position: relative; width: 65px; padding: 15px 0 0 18px; margin-right: 5px; border-right: 1px solid #b9b2a4; }
.notify .count { left: 28px; top: 24px; }
```
